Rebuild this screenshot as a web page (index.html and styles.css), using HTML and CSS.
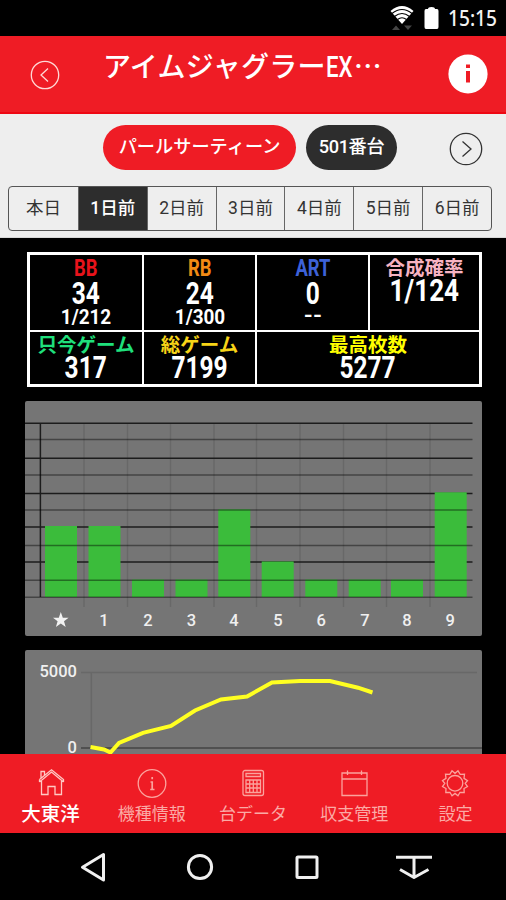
FILE: index.html
```html
<!DOCTYPE html>
<html lang="ja">
<head>
  <meta charset="UTF-8" />
  <meta name="viewport" content="width=device-width, initial-scale=1" />
  <title>台データ</title>
  <link rel="stylesheet" href="styles.css">
</head>
<body>
  <div class="status">
    <svg class="wifi" width="26" height="26" viewBox="0 0 26 26">
      <path d="M1.5 6 Q13 -4 24.5 6 L13 19 Z" fill="#fff" />
      <path d="M3 8.5 Q13 0.5 23 8.5 M5.5 11.5 Q13 5.5 20.5 11.5 M8.5 14.5 Q13 11 17.5 14.5" fill="none" stroke="#000" stroke-width="1.1" />
      <path d="M3 25 L7 20.5 L11 25 Z M15 20.5 H23 L19 25 Z" fill="#444" />
    </svg>
    <svg class="battery" width="15" height="22" viewBox="0 0 15 22">
      <path d="M4 2 Q4 0 7.5 0 T11 2 H13 Q14.5 2 14.5 4 V20 Q14.5 22 13 22 H2 Q.5 22 .5 20 V4 Q.5 2 2 2 Z" fill="#fff" />
    </svg>
    <span class="clock">15:15</span>
  </div>

  <header class="header">
    <svg class="back" width="30" height="30" viewBox="0 0 30 30">
      <circle cx="15" cy="15" r="13.7" />
      <path d="M18 8.5 L11 15 L18 21.5" />
    </svg>
    <h1 class="title">アイムジャグラー<span class="half">EX</span>…</h1>
    <svg class="info" width="40" height="40" viewBox="0 0 40 40">
      <circle cx="20" cy="20" r="19.6" fill="#fff" />
      <path d="M18 10.5 H22 V14 H18 Z M18 17 H22 V28.5 H18 Z" fill="#ef1c25" />
    </svg>
  </header>

  <section class="filter">
    <div class="pills">
      <span class="pill pill-red">パールサーティーン</span>
      <span class="pill pill-dark">501番台</span>
      <svg class="next" width="34" height="34" viewBox="0 0 34 34">
        <circle cx="17" cy="17" r="15.7" />
        <path d="M13.5 9.5 L22 17 L13.5 24.5" />
      </svg>
    </div>
    <div class="days">
      <span>本日</span>
      <span class="active">1日前</span>
      <span>2日前</span>
      <span>3日前</span>
      <span>4日前</span>
      <span>5日前</span>
      <span>6日前</span>
    </div>
  </section>

  <main class="main">
    <div class="data">
      <div class="cell"><b class="label red narrow">BB</b><b class="num">34</b><b class="rate">1/212</b></div>
      <div class="cell"><b class="label orange narrow">RB</b><b class="num">24</b><b class="rate">1/300</b></div>
      <div class="cell"><b class="label blue narrow">ART</b><b class="num">0</b><b class="rate dash">--</b></div>
      <div class="cell total"><b class="label pink">合成確率</b><b class="num">1/124</b></div>
      <div class="cell low"><b class="label green">只今ゲーム</b><b class="num">317</b></div>
      <div class="cell low"><b class="label gold">総ゲーム</b><b class="num">7199</b></div>
      <div class="cell low wide"><b class="label yellow">最高枚数</b><b class="num">5277</b></div>
    </div>

    <svg class="chart" width="457" height="235" viewBox="25 401 457 235">
      <!-- columns -->
      <path class="faint" d="M84 423V607 M127.5 423V607 M170.5 423V607 M214 423V607 M256.5 423V607 M300 423V607 M343.5 423V607 M386.5 423V607 M430 423V607" />
      <!-- even rows and the axis, behind the bars -->
      <path class="strong" d="M25 423.2H472.5 M25 458.2H472.5 M25 493.5H472.5 M25 527H472.5 M25 562H472.5 M40.4 423V597" />
      <g class="bars">
        <rect x="45" y="526" width="32" height="71" />
        <rect x="88.5" y="526" width="32" height="71" />
        <rect x="132" y="579.5" width="32" height="17.5" />
        <rect x="175.5" y="579.5" width="32" height="17.5" />
        <rect x="218.3" y="509.3" width="32" height="87.7" />
        <rect x="261.7" y="561.5" width="32" height="35.5" />
        <rect x="305.3" y="579.5" width="32" height="17.5" />
        <rect x="348.7" y="579.5" width="32" height="17.5" />
        <rect x="391" y="579.5" width="32" height="17.5" />
        <rect x="434.7" y="492.3" width="32" height="104.7" />
      </g>
      <!-- odd rows, over the bars -->
      <path class="weak" d="M25 439.5H472.5 M25 475H472.5 M25 510H472.5 M25 545.5H472.5 M25 580.3H472.5 M25 597.3H472.5" />
      <path d="M60.8 612 L62.8 617.7 H68.6 L64 621.3 L65.7 627 L60.8 623.6 L55.9 627 L57.6 621.3 L53 617.7 H58.8 Z" fill="#f2f2f2" />
      <g class="axis" text-anchor="middle">
        <text x="104" y="626.3">1</text>
        <text x="148" y="626.3">2</text>
        <text x="191.5" y="626.3">3</text>
        <text x="234" y="626.3">4</text>
        <text x="278" y="626.3">5</text>
        <text x="321.3" y="626.3">6</text>
        <text x="365" y="626.3">7</text>
        <text x="407" y="626.3">8</text>
        <text x="450.3" y="626.3">9</text>
      </g>
    </svg>

    <svg class="chart" width="457" height="235" viewBox="25 650 457 235">
      <path class="faint" d="M81 672.5H477 M91.3 672.5V748" />
      <path class="weak" d="M81 748H482" />
      <g class="axis" text-anchor="end">
        <text x="77" y="677">5000</text>
        <text x="77" y="752.5">0</text>
      </g>
      <polyline class="slump" points="90.5,747 104,749.5 110.5,752.5 119,743 143,732.8 171,726 195,710.5 221,699.5 247,696.5 272,682.5 300,681 330,681 358,687.7 372.5,692.5" />
    </svg>
  </main>

  <nav class="tabs">
    <a class="tab current">
      <svg width="30" height="30" viewBox="0 0 30 30">
        <path d="M3.5 14 L15.5 4 L27.5 14 M3.5 11.5 L15.5 1.8 L27.5 11.5 V14 M3.5 14 V11.5 M5 10 V3.5 H8.5 V7 M5.5 13 V26.5 H12 V18.5 H19 V26.5 H25.5 V13" />
      </svg>
      <span>大東洋</span>
    </a>
    <a class="tab">
      <svg width="30" height="30" viewBox="0 0 30 30">
        <circle cx="15" cy="15.5" r="13.8" />
        <path d="M15.2 9 V11.2 M13.5 14 H15.2 V21.5 M13.2 21.5 H17.5" stroke-width="1.7" />
      </svg>
      <span>機種情報</span>
    </a>
    <a class="tab">
      <svg width="30" height="30" viewBox="0 0 30 30">
        <rect x="5" y="2.5" width="20.5" height="25" rx="2" />
        <path d="M8 5.5 H22.5 V8.5 H8 Z M8 12 H22.5 V24.5 H8 Z M8 16 H22.5 M8 20 H22.5 M11.7 12 V24.5 M15.3 12 V24.5 M19 12 V24.5" />
      </svg>
      <span>台データ</span>
    </a>
    <a class="tab">
      <svg width="30" height="30" viewBox="0 0 30 30">
        <path d="M3 5 H28 V27.5 H3 Z M3 11 H28 M8.5 2.5 V7 M22.5 2.5 V7" />
      </svg>
      <span>収支管理</span>
    </a>
    <a class="tab">
      <svg width="30" height="30" viewBox="0 0 30 30">
        <circle cx="15" cy="15.3" r="7.8" />
        <path d="M12 2.8 L15 5.3 L18 2.8 L20.2 6.4 L24.5 6.2 L24 10.4 L27.5 12.6 L25.2 15.3 L27.5 18.5 L24 20.5 L24.2 24.5 L20 24.3 L18 27.8 L15 25.4 L12 27.8 L10 24.3 L5.8 24.5 L6 20.5 L2.5 18.5 L4.8 15.3 L2.5 12.6 L6 10.4 L5.5 6.2 L9.8 6.4 Z" />
      </svg>
      <span>設定</span>
    </a>
  </nav>

  <div class="navbar">
    <svg width="40" height="34" viewBox="0 0 40 34"><path d="M30.5 4.5 V30 L9.5 17.2 Z" /></svg>
    <svg width="40" height="34" viewBox="0 0 40 34"><circle cx="20" cy="17" r="11.6" /></svg>
    <svg width="40" height="34" viewBox="0 0 40 34"><rect x="10" y="7" width="20" height="20.5" rx="1" /></svg>
    <svg width="40" height="34" viewBox="0 0 40 34"><path d="M2 7.3 H38 M20 7.3 V26 M6 19.5 L20 27.5 L34.5 19.5" /></svg>
  </div>
</body>
</html>
```

FILE: styles.css
```css
* {
  box-sizing: border-box;
}

body {
  margin: 0;
  width: 506px;
  height: 900px;
  overflow: hidden;
  display: flex;
  flex-direction: column;
  background-color: #000;
  font-family: "Noto Sans CJK JP", sans-serif;
}

svg {
  display: block;
  flex: none;
}

/* status bar */
.status {
  flex: none;
  height: 36px;
  padding: 5px 8px 0 0;
  display: flex;
  justify-content: flex-end;
  align-items: flex-start;
}

.battery {
  margin: 2px 9px 0 9px;
}

.clock {
  color: #f2f2f2;
  font: 500 21.5px/25px "Noto Sans", sans-serif;
  width: 50px;
  transform: scaleX(0.89);
  transform-origin: 0 50%;
}

/* header */
.header {
  flex: none;
  height: 78px;
  padding: 0 18px 0 30px;
  display: flex;
  align-items: center;
  background-color: #ef1c25;
  border-bottom: 2px solid #ee0713;
}

.back, .next {
  fill: none;
  stroke: #ffd9d6;
  stroke-width: 1.3;
}

.back {
  margin-top: 2px;
}

.title {
  margin: 0 0 16px 43px;
  flex: 1;
  color: #fff;
  font-size: 28px;
  font-weight: 500;
  line-height: 40px;
  letter-spacing: 0.25px;
  white-space: nowrap;
}

.half {
  display: inline-block;
  width: 28px;
  font-family: Roboto, sans-serif;
  font-size: 30px;
  font-weight: 500;
  letter-spacing: 0;
  transform: scaleX(0.74);
  transform-origin: 0 50%;
}

/* shop, machine and day selection */
.filter {
  flex: none;
  height: 124px;
  padding: 10px 14px 0 8px;
  background-color: #eee;
  border-bottom: 1px solid #d8d8d8;
}

.pills {
  display: flex;
  align-items: center;
  gap: 10px;
  padding-left: 95px;
  height: 46px;
}

.pill {
  height: 45px;
  border-radius: 23px;
  color: #fff;
  font-size: 18.2px;
  font-weight: 500;
  line-height: 41px;
  text-align: center;
  white-space: nowrap;
}

.pill-red {
  width: 193px;
  background-color: #ef1c25;
}

.pill-dark {
  width: 91px;
  background-color: #2d2d2d;
  font-family: Roboto, "Noto Sans CJK JP", sans-serif;
  letter-spacing: -0.4px;
  line-height: 43px;
}

.next {
  margin: 3px 9px 0 auto;
  stroke: #333;
}

.days {
  display: grid;
  grid-template-columns: repeat(7, 1fr);
  height: 45px;
  margin-top: 16px;
  border: 1px solid #555;
  border-radius: 4px;
}

.days span {
  color: #333;
  font-family: Roboto, "Noto Sans CJK JP", sans-serif;
  font-size: 17.5px;
  line-height: 43px;
  text-align: center;
  border-left: 1px solid #666;
}

.days span:first-child {
  border-left: none;
}

.days .active {
  background-color: #2d2d2d;
  color: #fff;
  font-weight: 500;
}

/* counters and graphs */
.main {
  flex: none;
  height: 516px;
  overflow: hidden;
  padding: 14px 24px 0 25px;
}

.data {
  display: grid;
  grid-template-columns: 112px 111px 111px 109px;
  grid-template-rows: 75px 52px;
  gap: 2px;
  width: 455px;
  margin: 0 0 14px 2px;
  border: 3px solid #fff;
  background-color: #fff;
}

.cell {
  display: flex;
  flex-direction: column;
  align-items: center;
  background-color: #000;
  color: #fff;
  font-family: Roboto, "Noto Sans CJK JP", sans-serif;
}

.wide {
  grid-column: span 2;
}

.label {
  font-size: 19.5px;
  font-weight: 700;
  line-height: 28px;
  white-space: nowrap;
}

.narrow {
  font-size: 23px;
  transform: scaleX(0.8);
}

.num {
  font-size: 31px;
  line-height: 21px;
  transform: scaleX(0.79);
}

.rate {
  font-size: 21px;
  line-height: 27px;
  transform: scaleX(0.9);
}

.dash {
  font-size: 20px;
  line-height: 22px;
  transform: scaleX(1.15);
}

.total .num {
  line-height: 16px;
  transform: scaleX(0.84);
}

.low .label {
  line-height: 27px;
}

.low .num {
  line-height: 17px;
}

.red { color: #e8131b; }
.orange { color: #f28a14; }
.blue { color: #3d62d8; }
.pink { color: #f7b3c2; }
.green { color: #1fe07c; }
.gold { color: #f7d417; }
.yellow { color: #ffff00; }

.chart {
  background-color: #757575;
  border-radius: 2px;
  margin-bottom: 14px;
}

.chart path {
  stroke-width: 1.5;
}

.chart .strong { stroke: #1c1c1c; }
.chart .weak { stroke: rgba(0, 0, 0, 0.42); }
.chart .faint { stroke: #686868; }

.bars {
  fill: #3bbc3b;
}

.axis {
  fill: #f0f0f0;
  font: 500 16.5px Roboto, sans-serif;
}

.slump {
  fill: none;
  stroke: #ffff21;
  stroke-width: 4;
}

/* bottom tabs */
.tabs {
  flex: none;
  height: 79px;
  display: grid;
  grid-template-columns: repeat(5, 1fr);
  background-color: #ef1c25;
}

.tab {
  display: flex;
  flex-direction: column;
  align-items: center;
  padding-top: 14px;
  color: #fbaaa5;
  font-size: 17px;
  line-height: 30px;
  white-space: nowrap;
}

.tab svg {
  fill: none;
  stroke: #fba39d;
  stroke-width: 1.3;
}

.current {
  color: #fff;
  font-size: 19.5px;
  font-weight: 500;
}

.current svg {
  stroke: #ffc9c4;
}

/* system buttons */
.navbar {
  flex: none;
  height: 67px;
  padding: 17px 38px 0 39px;
  display: grid;
  grid-template-columns: repeat(4, 107px);
  justify-items: center;
}

.navbar svg {
  fill: none;
  stroke: #f0f0f0;
  stroke-width: 3;
  stroke-linejoin: round;
}
```
